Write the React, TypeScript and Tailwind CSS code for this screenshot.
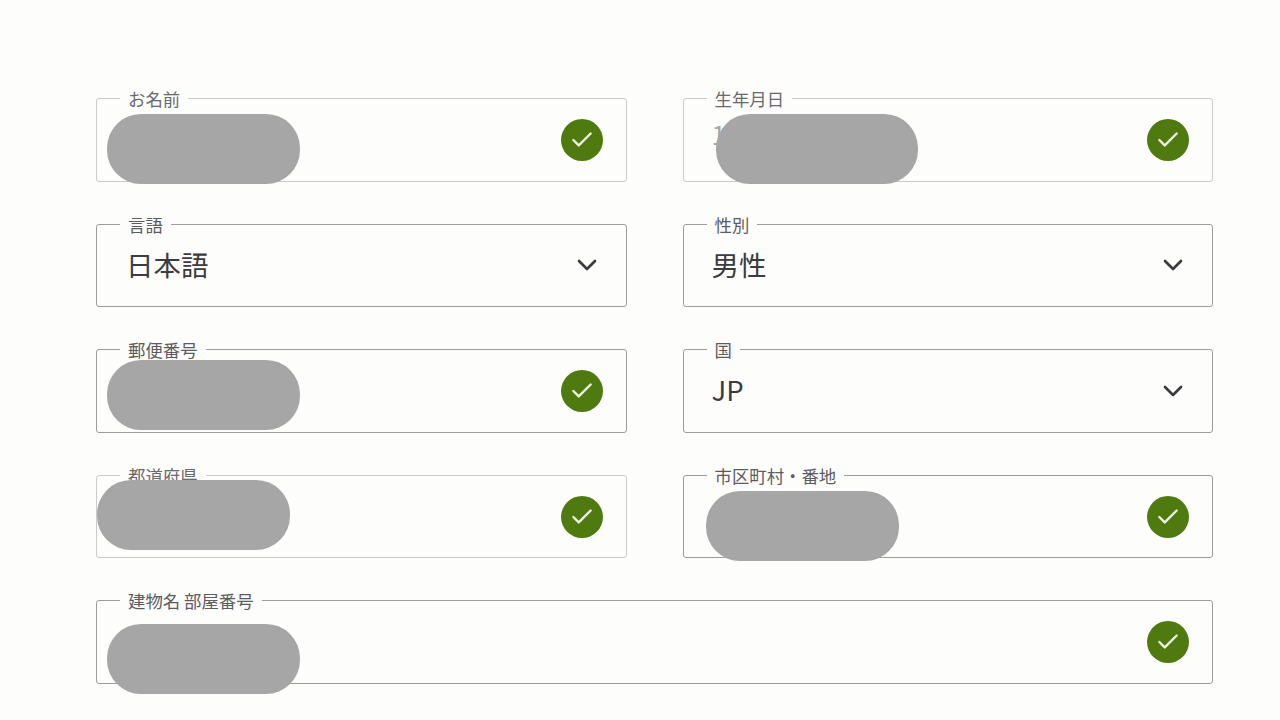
import { ChevronDown, Check } from 'lucide-react';

type FieldProps = {
  label: string;
  muted?: boolean;
  select?: boolean;
  value?: string;
  valueClass?: string;
  faint?: string;
  blobClass?: string;
  className?: string;
};

function Field({ label, muted, select, value, valueClass, faint, blobClass, className }: FieldProps) {
  return (
    <div
      className={`relative h-[83.5px] rounded-[3px] border flex items-center justify-between pl-[15px] ${
        muted ? 'border-[#cbcbcb]' : 'border-[#9c9c9c]'
      } ${className ?? ''}`}
    >
      <span className={`absolute left-[23px] top-[-11px] bg-[#fdfdfc] px-[8px] text-[17.4px] leading-[22px] ${muted ? 'text-[#6a6a6e]' : 'text-[#5c5c60]'}`}>
        {label}
      </span>
      {faint ? <span className="text-[26px] text-[#a8a8a8] leading-none mb-[12px] ml-[13px]">{faint}</span> : <span className={`text-[#3b3b40] mb-[2px] ${valueClass ?? ''}`}>{value}</span>}
      {select ? (
        <ChevronDown size={32} strokeWidth={2} className="text-[#3b3b40] mr-[23px]" />
      ) : (
        <span className="mr-[23px] flex h-[42px] w-[42px] items-center justify-center rounded-full bg-[#4f7a0f]">
          <Check size={26} strokeWidth={2.2} className="text-[#eef3e2]" />
        </span>
      )}
      {blobClass ? <div className={`absolute h-[70px] rounded-[34px] bg-[#a7a6a6] ${blobClass}`} /> : null}
    </div>
  );
}

export default function App() {
  return (
    <div
      className="h-[720px] w-[1280px] overflow-hidden bg-[#fdfdfc] pl-[96px] pt-[98px]"
      style={{ fontFamily: '"Noto Sans CJK JP", "Noto Sans", sans-serif' }}
    >
      <div className="grid w-[1117px] grid-cols-2 gap-x-[56px] gap-y-[42.1px]">
        <Field label="お名前" muted blobClass="left-[10px] top-[15px] w-[193px]" />
        <Field label="生年月日" muted faint="1" blobClass="left-[32px] top-[15px] w-[202px]" />
        <Field label="言語" select value="日本語" valueClass="text-[27.5px] pl-[14px]" />
        <Field label="性別" select value="男性" valueClass="text-[27.5px] pl-[13px]" />
        <Field label="郵便番号" blobClass="left-[10px] top-[10px] w-[193px]" />
        <Field label="国" select value="JP" valueClass="text-[27.5px] pl-[13px]" />
        <Field label="都道府県" muted blobClass="left-0 top-[4px] w-[193px]" />
        <Field label="市区町村・番地" blobClass="left-[22px] top-[15px] w-[193px]" />
        <Field label="建物名 部屋番号" className="col-span-2" blobClass="left-[10px] top-[23px] w-[193px]" />
      </div>
    </div>
  );
}
